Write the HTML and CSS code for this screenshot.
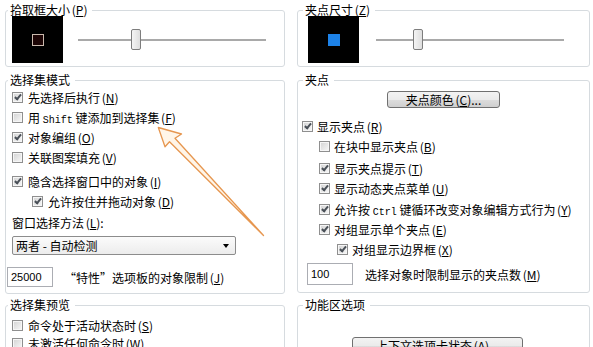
FILE: index.html
```html
<!DOCTYPE html>
<html lang="zh-CN">
  <head>
    <meta charset="utf-8">
    <title>选项 - 选择集</title>
    <link rel="stylesheet" href="styles.css">
  </head>
  <body>
    <div class="page">
      <div class="col col-left">
        <fieldset class="box box-size">
          <legend>拾取框大小 <span class="key">(<u>P</u>)</span></legend>
          <div class="size-row">
            <div class="preview"><span class="pick"></span></div>
            <div class="slider"><span class="thumb" style="margin-left:53px"></span></div>
          </div>
        </fieldset>

        <fieldset class="box box-mode">
          <legend>选择集模式</legend>
          <div class="row"><span class="cb on"></span><span>先选择后执行 <span class="key">(<u>N</u>)</span></span></div>
          <div class="row"><span class="cb"></span><span>用 <span class="mono">Shift</span> 键添加到选择集 <span class="key">(<u>F</u>)</span></span></div>
          <div class="row"><span class="cb on"></span><span>对象编组 <span class="key">(<u>O</u>)</span></span></div>
          <div class="row"><span class="cb"></span><span>关联图案填充 <span class="key">(<u>V</u>)</span></span></div>
          <div class="row gap4"><span class="cb on"></span><span>隐含选择窗口中的对象 <span class="key">(<u>I</u>)</span></span></div>
          <div class="row indent"><span class="cb on"></span><span>允许按住并拖动对象 <span class="key">(<u>D</u>)</span></span></div>
          <div class="win-label">窗口选择方法 <span class="key">(<u>L</u>)</span>:</div>
          <div class="combo"><span>两者 - 自动检测</span><span class="caret"></span></div>
          <div class="num-row">
            <div class="num">25000</div>
            <span>“特性”选项板的对象限制 <span class="key">(<u>J</u>)</span></span>
          </div>
        </fieldset>

        <fieldset class="box box-preview">
          <legend>选择集预览</legend>
          <div class="row"><span class="cb"></span><span>命令处于活动状态时 <span class="key">(<u>S</u>)</span></span></div>
          <div class="row"><span class="cb"></span><span>未激活任何命令时 <span class="key">(<u>W</u>)</span></span></div>
        </fieldset>
      </div>

      <div class="col col-right">
        <fieldset class="box box-size">
          <legend>夹点尺寸 <span class="key">(<u>Z</u>)</span></legend>
          <div class="size-row">
            <div class="preview"><span class="grip"></span></div>
            <div class="slider"><span class="thumb" style="margin-left:37px"></span></div>
          </div>
        </fieldset>

        <fieldset class="box box-grips">
          <legend>夹点</legend>
          <div class="btn btn-color"><span>夹点颜色 <span class="key">(<u>C</u>)...</span></span></div>
          <div class="row first"><span class="cb on"></span><span>显示夹点 <span class="key">(<u>R</u>)</span></span></div>
          <div class="row indent"><span class="cb"></span><span>在块中显示夹点 <span class="key">(<u>B</u>)</span></span></div>
          <div class="row indent gap2"><span class="cb on"></span><span>显示夹点提示 <span class="key">(<u>T</u>)</span></span></div>
          <div class="row indent"><span class="cb on"></span><span>显示动态夹点菜单 <span class="key">(<u>U</u>)</span></span></div>
          <div class="row indent gap1"><span class="cb on"></span><span>允许按 <span class="mono">Ctrl</span> 键循环改变对象编辑方式行为 <span class="key">(<u>Y</u>)</span></span></div>
          <div class="row indent"><span class="cb on"></span><span>对组显示单个夹点 <span class="key">(<u>E</u>)</span></span></div>
          <div class="row indent2"><span class="cb on"></span><span>对组显示边界框 <span class="key">(<u>X</u>)</span></span></div>
          <div class="num-row">
            <div class="num">100</div>
            <span>选择对象时限制显示的夹点数 <span class="key">(<u>M</u>)</span></span>
          </div>
        </fieldset>

        <fieldset class="box box-ribbon">
          <legend>功能区选项</legend>
          <div class="btn btn-ribbon"><span>上下文选项卡状态 <span class="key">(<u>A</u>)...</span></span></div>
        </fieldset>
      </div>
    </div>

    <!-- annotation arrow drawn over the dialog -->
    <svg class="arrow" width="593" height="347" viewBox="0 0 593 347">
      <polygon points="158.3,127.5 181.5,134 175,138.3 263.5,235.5 169.5,141.8 165,146.8"
               fill="rgba(255,225,190,0.35)" stroke="#e6964f" stroke-width="1.3" stroke-linejoin="round"/>
    </svg>
  </body>
</html>
```

FILE: styles.css
```css
html, body {margin: 0; padding: 0; overflow: hidden;}
body {background: #fff; color: #000; font-family: "Noto Sans CJK SC", "Noto Sans", sans-serif; font-size: 12px; width: 593px; height: 347px; position: relative;}

.page {display: flex; padding: 3px 0 0 5px; gap: 12px;}
.col {display: flex; flex-direction: column;}
.col-left {width: 280px;}
.col-right {width: 293px;}

.box {margin: 0; padding: 0; border: 1px solid #d6dbdf; border-radius: 3px; min-width: 0;}
.box legend {padding: 0 5px 0 2px; margin-left: 2px; line-height: 14px; font-size: 12px;}
.col-right .box legend {margin-left: 5px;}
.key {margin-left: -1px;}
.mono {font-family: "Liberation Mono", monospace; font-size: 10px;}

/* size previews + sliders */
.box-size {padding-bottom: 3px;}
.size-row {display: flex; align-items: center; margin-top: -1px; height: 47px;}
.preview {width: 51px; height: 47px; background: #000; display: flex; align-items: center; justify-content: center; flex: none;}
.col-left .preview {margin-left: 6px;}
.col-right .preview {margin-left: 10px;}
.pick {width: 12px; height: 12px; box-sizing: border-box; border: 1px solid #c9b9ad; background: #1c0505;}
.grip {width: 12px; height: 12px; background: #1d82e8;}
.slider {width: 188px; height: 21px; display: flex; align-items: center; background: linear-gradient(#a9a9a9, #a9a9a9) center / 100% 2px no-repeat;}
.col-left .slider {margin-left: 15px;}
.col-right .slider {margin-left: 17px;}
.thumb {width: 10px; height: 21px; box-sizing: border-box; border: 1px solid #7d7d7d; border-radius: 2px; background: linear-gradient(90deg, #f4f4f4, #dedede);}

/* checkbox rows */
.row {display: flex; align-items: center; height: 20px; white-space: nowrap;}
.col-left .row {margin-left: 6px;}
.col-left .row.indent {margin-left: 26px;}
.col-right .row {margin-left: 4px;}
.col-right .row.indent {margin-left: 21px;}
.col-right .row.indent2 {margin-left: 39px;}
.row.gap4 {margin-top: 4px;}
.row.gap2 {margin-top: 2px;}
.row.gap1 {margin-top: 1px;}
.row.first {margin-top: 8px;}
.cb {width: 11px; height: 11px; box-sizing: border-box; border: 1px solid #8f8f8f; box-shadow: inset 0 0 0 1px #f6f6f6; background: linear-gradient(135deg, #d3d3d3, #f8f8f8); margin-right: 5px; flex: none; position: relative;}
.col-right .cb {margin-right: 4px;}
.cb.on::after {content: ""; position: absolute; left: 3px; top: 0px; width: 2px; height: 5px; border: solid #4a5058; border-width: 0 2px 2px 0; transform: rotate(40deg);}

.box-mode {padding-bottom: 6px; margin-top: 6px;}
.win-label {margin: 2px 0 0 6px; height: 20px; line-height: 20px;}
.combo {margin: 3px 0 0 6px; width: 224px; height: 19px; box-sizing: border-box; border: 1px solid #8c8c8c; border-radius: 2px; background: linear-gradient(#fbfbfb, #ececec); display: flex; align-items: center; justify-content: space-between; padding: 0 6px 0 3px;}
.caret {width: 0; height: 0; border-left: 3.5px solid transparent; border-right: 3.5px solid transparent; border-top: 4px solid #000;}

.num-row {display: flex; align-items: center; white-space: nowrap;}
.box-mode .num-row {margin: 12px 0 0 1px; height: 20px; gap: 11px;}
.box-grips .num-row {margin: 4px 0 0 9px; height: 22px; gap: 12px;}
.num {width: 46px; height: 100%; box-sizing: border-box; border: 1px solid #abadb3; font-family: "Liberation Sans", sans-serif; font-size: 11px; padding-left: 3px; display: flex; align-items: center; background: #fff;}

.box-preview {margin-top: 4px; padding-top: 4px; padding-bottom: 20px;}
.box-preview .row {height: 18px;}

/* buttons */
.btn {height: 17px; box-sizing: border-box; border: 1px solid #707070; border-radius: 3px; background: linear-gradient(#f3f3f3 0%, #ebebeb 50%, #dddddd 51%, #cfcfcf 100%); display: flex; align-items: center; justify-content: center; white-space: nowrap;}
.btn-color {width: 113px; margin: 4px 0 0 89px;}
.btn-ribbon {width: 171px; margin: 25px 0 10px 54px;}
.box-grips {margin-top: 6px; padding-bottom: 7px;}
.box-ribbon {margin-top: 5px;}

.arrow {position: absolute; left: 0; top: 0; pointer-events: none;}
```
